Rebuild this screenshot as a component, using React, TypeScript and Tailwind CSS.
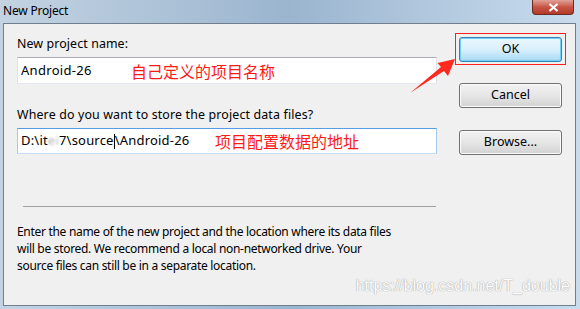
import React from 'react';

const ui = "font-['Segoe_UI','Noto_Sans','Liberation_Sans',sans-serif]";
const cjk = "font-['Noto_Sans_CJK_SC',sans-serif]";

function WinButton({ label, isDefault = false }: { label: string; isDefault?: boolean }) {
  return (
    <button
      type="button"
      className={
        isDefault
          ? 'block h-[25px] w-[103px] rounded-[3px] border border-[#3c7fb1] bg-gradient-to-b from-[#eaf6fd] via-[#d9f0fc] to-[#a7d9f5] text-[12.5px] text-black shadow-[inset_0_0_0_1px_#6fd0f8]'
          : 'block h-[25px] w-[103px] rounded-[3px] border border-[#707070] bg-gradient-to-b from-[#f2f2f2] via-[#e6e6e6] to-[#d2d2d2] text-[12.5px] text-black shadow-[inset_0_0_0_1px_#fcfcfc]'
      }
    >
      {label}
    </button>
  );
}

export default function App() {
  return (
    <div className={`relative flex h-[309px] w-[580px] flex-col overflow-hidden bg-gradient-to-r from-[#c3d3e2] via-[#9bb5cf] to-[#c9dcee] ${ui}`}>
      {/* title bar */}
      <div className="flex h-[23px] items-center justify-between pl-[3px] pr-[6px]">
        <span className="-mt-[2px] text-[12px] tracking-[-0.2px] text-black">New Project</span>
        <div className="-mt-[8px] flex h-[15px] w-[42px] items-center justify-center rounded-b-[4px] border border-t-0 border-[#6b2a22] bg-gradient-to-b from-[#e0a197] via-[#c75545] to-[#b23a28]">
          <svg width="11" height="9" viewBox="0 0 11 9">
            <path d="M1.5 1 L9.5 8 M9.5 1 L1.5 8" stroke="#fff" strokeWidth="2.2" />
          </svg>
        </div>
      </div>

      {/* client area */}
      <div className="relative mb-[3px] ml-[3px] mr-[4px] flex flex-1 border border-[#6f7f8f] bg-[#f0f0f0]">
        <div className="flex w-[433px] flex-col pl-[13px] pt-[12px]">
          <div className="h-[16px] text-[12.4px] leading-[16px] tracking-[0.1px] text-black">New project name:</div>
          <div className="mt-[5px] flex h-[27px] w-[420px] items-center border border-[#abadb3] border-l-[#e2e3ea] border-r-[#e2e3ea] border-b-[#e3e9ef] bg-white pl-[3px]">
            <span className="w-[110px] text-[13px] tracking-[0.3px] text-black">Android-26</span>
            <span className={`text-[16px] text-[#ff1a1a] ${cjk}`}>自己定义的项目名称</span>
          </div>

          <div className="mt-[23px] h-[16px] text-[12.4px] leading-[16px] tracking-[0.15px] text-black">Where do you want to store the project data files?</div>
          <div className="mt-[5px] flex h-[26px] w-[420px] items-center border border-[#569de5] border-l-[#a4c9ef] border-r-[#a4c9ef] border-b-[#c5ddf5] bg-white pl-[3px]">
            <span className="flex w-[194px] items-center text-[13px] tracking-[0.2px] text-black">
              D:\it
              <span className="text-[#b5b5b5] blur-[1.2px]">e</span>
              <span className="text-[#c0c0c0] blur-[1px]">i</span>
              7\source
              <span className="h-[15px] w-px bg-black" />
              \Android-26
            </span>
            <span className={`text-[16px] text-[#ff1a1a] ${cjk}`}>项目配置数据的地址</span>
          </div>

          <div className="ml-[6px] mt-[52px] h-px w-[413px] bg-[#a0a0a0]" />

          <p className="mt-[16px] text-[12px] leading-[17px] tracking-[-0.3px] text-black">
            Enter the name of the new project and the location where its data files
            <br />
            will be stored. We recommend a local non-networked drive. Your
            <br />
            source files can still be in a separate location.
          </p>
        </div>

        <div className="ml-[22px] flex flex-col pt-[13px]">
          <div className="relative">
            <div className="pointer-events-none absolute -bottom-[3px] -left-[4px] -right-[4px] -top-[4px] border border-[#ff2020]" />
            <WinButton label="OK" isDefault />
          </div>
          <div className="mt-[21px]">
            <WinButton label="Cancel" />
          </div>
          <div className="mt-[22px]">
            <WinButton label="Browse..." />
          </div>
        </div>

        {/* watermark */}
        <div className="pointer-events-none absolute bottom-[7px] right-[5px] font-['Liberation_Sans',Arial,sans-serif] text-[16px] text-[#fcfcfc] [text-shadow:0_0_1px_#a8a8a8,0_0_1px_#a8a8a8]">
          https://blog.csdn.net/T_double
        </div>
      </div>

      {/* red arrow annotation */}
      <svg className="pointer-events-none absolute left-0 top-0" width="580" height="309">
        <polygon points="410,93 441,67 437.5,63 455,59 448,76 444,71" fill="#ff2a1f" />
      </svg>
    </div>
  );
}
